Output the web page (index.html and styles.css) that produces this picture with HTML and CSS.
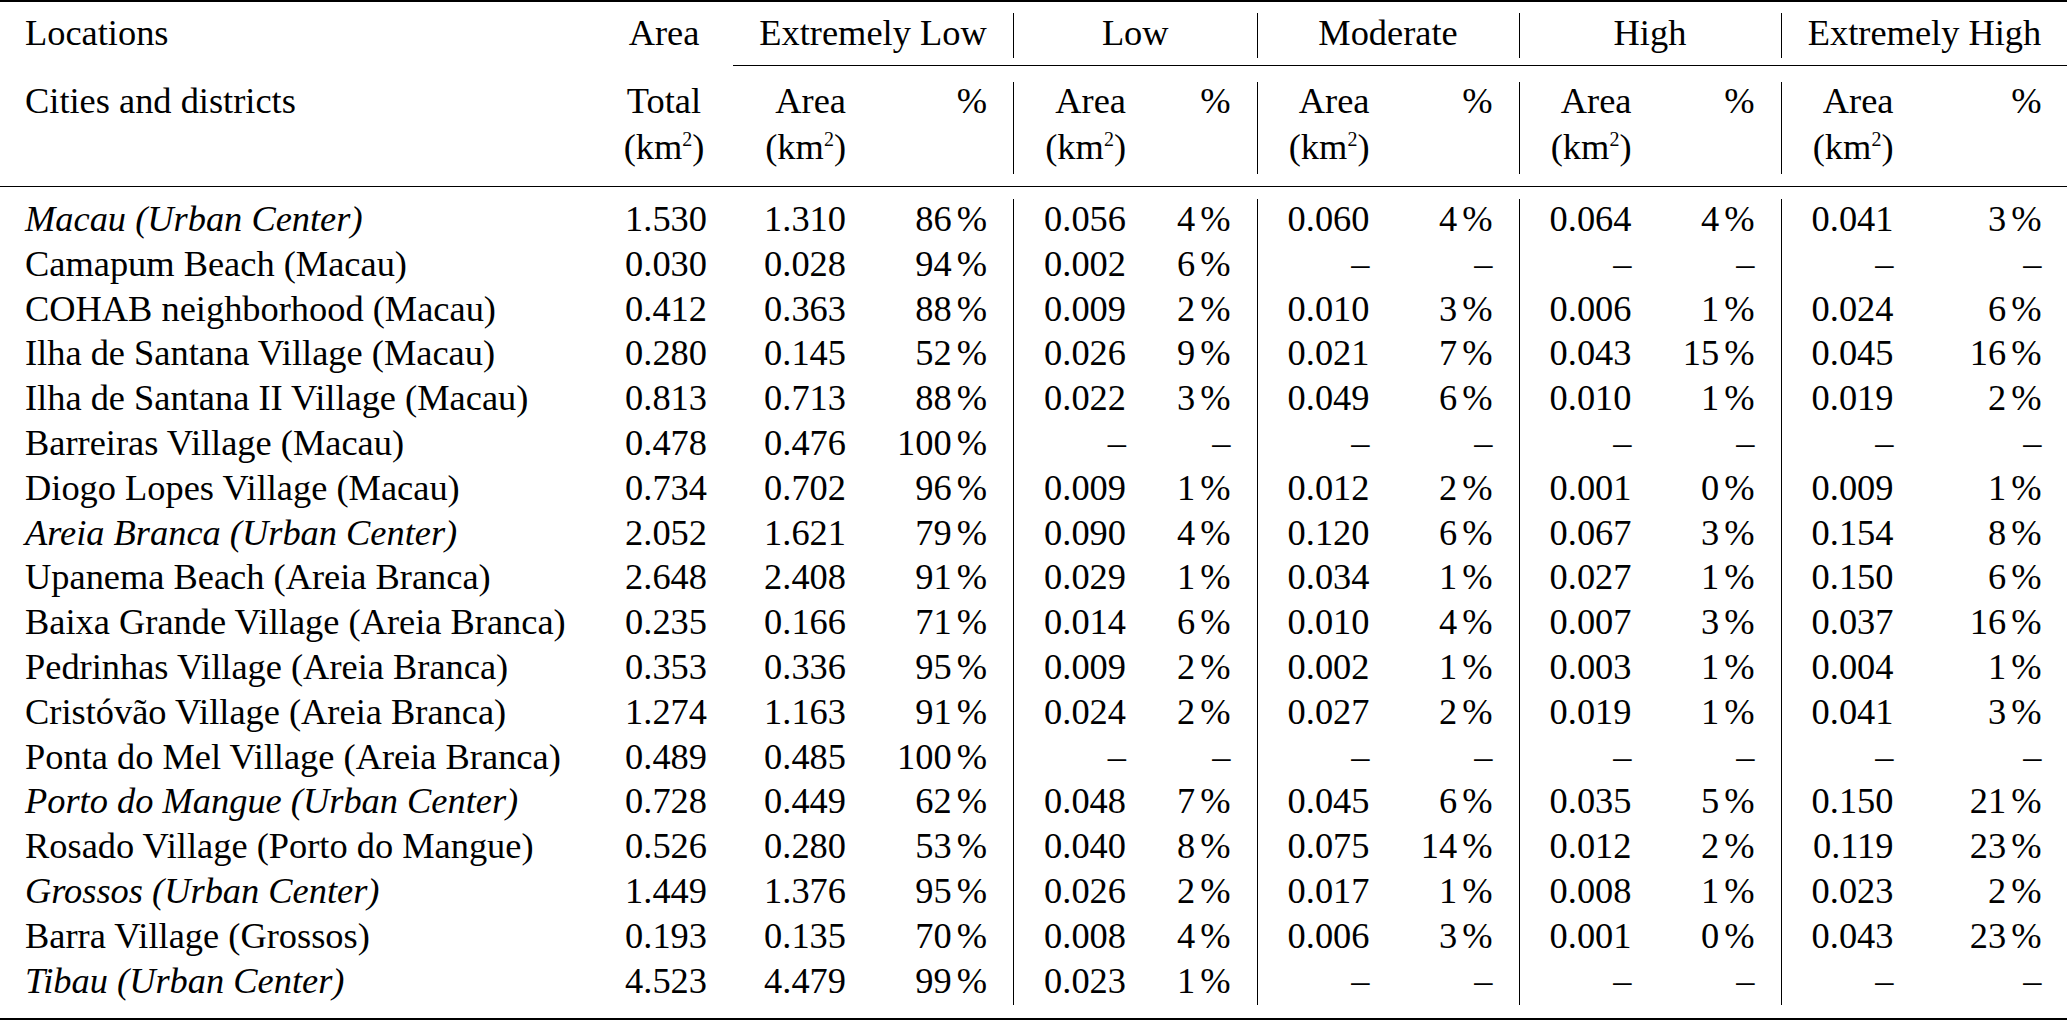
FILE: index.html
```html
<!DOCTYPE html>
<html lang="en">
<head>
<meta charset="utf-8">
<title>Susceptibility areas by location</title>
<link rel="stylesheet" href="styles.css">
</head>
<body>
<table class="tbl">
  <colgroup>
    <col class="c-loc"><col class="c-tot">
    <col class="c-area"><col class="c-el">
    <col class="c-area"><col class="c-lo">
    <col class="c-area"><col class="c-pc">
    <col class="c-area"><col class="c-pc">
    <col class="c-area"><col class="c-eh">
  </colgroup>
  <thead>
    <tr class="rule-top"><td colspan="12"></td></tr>
    <tr class="h1">
      <th class="loc">Locations</th>
      <th class="ctr">Area</th>
      <th class="ctr" colspan="2">Extremely Low</th>
      <th class="ctr vl" colspan="2">Low</th>
      <th class="ctr vl" colspan="2">Moderate</th>
      <th class="ctr vl" colspan="2">High</th>
      <th class="ctr vl" colspan="2">Extremely High</th>
    </tr>
    <tr class="gap-a"><td colspan="12"></td></tr>
    <tr class="cmid"><td colspan="2"></td><td class="cm" colspan="10"></td></tr>
    <tr class="h2">
      <th class="loc"><div class="ln">Cities and districts</div></th>
      <th class="ctr"><div class="ln">Total</div><div class="ln l2">(km<span class="sup">2</span>)</div></th>
      <th class="num"><div class="ln">Area</div><div class="ln l2">(km<span class="sup">2</span>)</div></th>
      <th class="num"><div class="ln">%</div></th>
      <th class="num vl"><div class="ln">Area</div><div class="ln l2">(km<span class="sup">2</span>)</div></th>
      <th class="num"><div class="ln">%</div></th>
      <th class="num vl"><div class="ln">Area</div><div class="ln l2">(km<span class="sup">2</span>)</div></th>
      <th class="num"><div class="ln">%</div></th>
      <th class="num vl"><div class="ln">Area</div><div class="ln l2">(km<span class="sup">2</span>)</div></th>
      <th class="num"><div class="ln">%</div></th>
      <th class="num vl"><div class="ln">Area</div><div class="ln l2">(km<span class="sup">2</span>)</div></th>
      <th class="num"><div class="ln">%</div></th>
    </tr>
    <tr class="gap-b"><td colspan="12"></td></tr>
    <tr class="rule-mid"><td colspan="12"></td></tr>
  </thead>
  <tbody>
    <tr><td class="loc it">Macau (Urban Center)</td><td class="num">1.530</td><td class="num">1.310</td><td class="num">86<span class="u">%</span></td><td class="num vl">0.056</td><td class="num">4<span class="u">%</span></td><td class="num vl">0.060</td><td class="num">4<span class="u">%</span></td><td class="num vl">0.064</td><td class="num">4<span class="u">%</span></td><td class="num vl">0.041</td><td class="num">3<span class="u">%</span></td></tr>
    <tr><td class="loc">Camapum Beach (Macau)</td><td class="num">0.030</td><td class="num">0.028</td><td class="num">94<span class="u">%</span></td><td class="num vl">0.002</td><td class="num">6<span class="u">%</span></td><td class="num vl">–</td><td class="num">–</td><td class="num vl">–</td><td class="num">–</td><td class="num vl">–</td><td class="num">–</td></tr>
    <tr><td class="loc">COHAB neighborhood (Macau)</td><td class="num">0.412</td><td class="num">0.363</td><td class="num">88<span class="u">%</span></td><td class="num vl">0.009</td><td class="num">2<span class="u">%</span></td><td class="num vl">0.010</td><td class="num">3<span class="u">%</span></td><td class="num vl">0.006</td><td class="num">1<span class="u">%</span></td><td class="num vl">0.024</td><td class="num">6<span class="u">%</span></td></tr>
    <tr><td class="loc">Ilha de Santana Village (Macau)</td><td class="num">0.280</td><td class="num">0.145</td><td class="num">52<span class="u">%</span></td><td class="num vl">0.026</td><td class="num">9<span class="u">%</span></td><td class="num vl">0.021</td><td class="num">7<span class="u">%</span></td><td class="num vl">0.043</td><td class="num">15<span class="u">%</span></td><td class="num vl">0.045</td><td class="num">16<span class="u">%</span></td></tr>
    <tr><td class="loc">Ilha de Santana II Village (Macau)</td><td class="num">0.813</td><td class="num">0.713</td><td class="num">88<span class="u">%</span></td><td class="num vl">0.022</td><td class="num">3<span class="u">%</span></td><td class="num vl">0.049</td><td class="num">6<span class="u">%</span></td><td class="num vl">0.010</td><td class="num">1<span class="u">%</span></td><td class="num vl">0.019</td><td class="num">2<span class="u">%</span></td></tr>
    <tr><td class="loc">Barreiras Village (Macau)</td><td class="num">0.478</td><td class="num">0.476</td><td class="num">100<span class="u">%</span></td><td class="num vl">–</td><td class="num">–</td><td class="num vl">–</td><td class="num">–</td><td class="num vl">–</td><td class="num">–</td><td class="num vl">–</td><td class="num">–</td></tr>
    <tr><td class="loc">Diogo Lopes Village (Macau)</td><td class="num">0.734</td><td class="num">0.702</td><td class="num">96<span class="u">%</span></td><td class="num vl">0.009</td><td class="num">1<span class="u">%</span></td><td class="num vl">0.012</td><td class="num">2<span class="u">%</span></td><td class="num vl">0.001</td><td class="num">0<span class="u">%</span></td><td class="num vl">0.009</td><td class="num">1<span class="u">%</span></td></tr>
    <tr><td class="loc it">Areia Branca (Urban Center)</td><td class="num">2.052</td><td class="num">1.621</td><td class="num">79<span class="u">%</span></td><td class="num vl">0.090</td><td class="num">4<span class="u">%</span></td><td class="num vl">0.120</td><td class="num">6<span class="u">%</span></td><td class="num vl">0.067</td><td class="num">3<span class="u">%</span></td><td class="num vl">0.154</td><td class="num">8<span class="u">%</span></td></tr>
    <tr><td class="loc">Upanema Beach (Areia Branca)</td><td class="num">2.648</td><td class="num">2.408</td><td class="num">91<span class="u">%</span></td><td class="num vl">0.029</td><td class="num">1<span class="u">%</span></td><td class="num vl">0.034</td><td class="num">1<span class="u">%</span></td><td class="num vl">0.027</td><td class="num">1<span class="u">%</span></td><td class="num vl">0.150</td><td class="num">6<span class="u">%</span></td></tr>
    <tr><td class="loc">Baixa Grande Village (Areia Branca)</td><td class="num">0.235</td><td class="num">0.166</td><td class="num">71<span class="u">%</span></td><td class="num vl">0.014</td><td class="num">6<span class="u">%</span></td><td class="num vl">0.010</td><td class="num">4<span class="u">%</span></td><td class="num vl">0.007</td><td class="num">3<span class="u">%</span></td><td class="num vl">0.037</td><td class="num">16<span class="u">%</span></td></tr>
    <tr><td class="loc">Pedrinhas Village (Areia Branca)</td><td class="num">0.353</td><td class="num">0.336</td><td class="num">95<span class="u">%</span></td><td class="num vl">0.009</td><td class="num">2<span class="u">%</span></td><td class="num vl">0.002</td><td class="num">1<span class="u">%</span></td><td class="num vl">0.003</td><td class="num">1<span class="u">%</span></td><td class="num vl">0.004</td><td class="num">1<span class="u">%</span></td></tr>
    <tr><td class="loc">Cristóvão Village (Areia Branca)</td><td class="num">1.274</td><td class="num">1.163</td><td class="num">91<span class="u">%</span></td><td class="num vl">0.024</td><td class="num">2<span class="u">%</span></td><td class="num vl">0.027</td><td class="num">2<span class="u">%</span></td><td class="num vl">0.019</td><td class="num">1<span class="u">%</span></td><td class="num vl">0.041</td><td class="num">3<span class="u">%</span></td></tr>
    <tr><td class="loc">Ponta do Mel Village (Areia Branca)</td><td class="num">0.489</td><td class="num">0.485</td><td class="num">100<span class="u">%</span></td><td class="num vl">–</td><td class="num">–</td><td class="num vl">–</td><td class="num">–</td><td class="num vl">–</td><td class="num">–</td><td class="num vl">–</td><td class="num">–</td></tr>
    <tr><td class="loc it">Porto do Mangue (Urban Center)</td><td class="num">0.728</td><td class="num">0.449</td><td class="num">62<span class="u">%</span></td><td class="num vl">0.048</td><td class="num">7<span class="u">%</span></td><td class="num vl">0.045</td><td class="num">6<span class="u">%</span></td><td class="num vl">0.035</td><td class="num">5<span class="u">%</span></td><td class="num vl">0.150</td><td class="num">21<span class="u">%</span></td></tr>
    <tr><td class="loc">Rosado Village (Porto do Mangue)</td><td class="num">0.526</td><td class="num">0.280</td><td class="num">53<span class="u">%</span></td><td class="num vl">0.040</td><td class="num">8<span class="u">%</span></td><td class="num vl">0.075</td><td class="num">14<span class="u">%</span></td><td class="num vl">0.012</td><td class="num">2<span class="u">%</span></td><td class="num vl">0.119</td><td class="num">23<span class="u">%</span></td></tr>
    <tr><td class="loc it">Grossos (Urban Center)</td><td class="num">1.449</td><td class="num">1.376</td><td class="num">95<span class="u">%</span></td><td class="num vl">0.026</td><td class="num">2<span class="u">%</span></td><td class="num vl">0.017</td><td class="num">1<span class="u">%</span></td><td class="num vl">0.008</td><td class="num">1<span class="u">%</span></td><td class="num vl">0.023</td><td class="num">2<span class="u">%</span></td></tr>
    <tr><td class="loc">Barra Village (Grossos)</td><td class="num">0.193</td><td class="num">0.135</td><td class="num">70<span class="u">%</span></td><td class="num vl">0.008</td><td class="num">4<span class="u">%</span></td><td class="num vl">0.006</td><td class="num">3<span class="u">%</span></td><td class="num vl">0.001</td><td class="num">0<span class="u">%</span></td><td class="num vl">0.043</td><td class="num">23<span class="u">%</span></td></tr>
    <tr><td class="loc it">Tibau (Urban Center)</td><td class="num">4.523</td><td class="num">4.479</td><td class="num">99<span class="u">%</span></td><td class="num vl">0.023</td><td class="num">1<span class="u">%</span></td><td class="num vl">–</td><td class="num">–</td><td class="num vl">–</td><td class="num">–</td><td class="num vl">–</td><td class="num">–</td></tr>
  </tbody>
  <tfoot>
    <tr class="gap-c"><td colspan="12"></td></tr>
    <tr class="rule-bot"><td colspan="12"></td></tr>
  </tfoot>
</table>
</body>
</html>
```

FILE: styles.css
```css
html, body {
  margin: 0;
  padding: 0;
  background: #ffffff;
}

body {
  font-family: "Liberation Serif", serif;
  font-size: 36.4px;
  color: #000000;
}

.tbl {
  width: 2067px;
  table-layout: fixed;
  border-collapse: separate;
  border-spacing: 0;
  font-family: "Liberation Serif", serif;
  font-size: 36.4px;
}

.c-loc { width: 595px; }
.c-tot { width: 138px; }
.c-area { width: 139px; }
.c-el { width: 141px; }
.c-lo { width: 104.5px; }
.c-pc { width: 123px; }
.c-eh { width: 148px; }

.tbl th,
.tbl td {
  padding: 0;
  font-family: "Liberation Serif", serif;
  font-weight: normal;
  vertical-align: top;
  white-space: nowrap;
  line-height: 38.8px;
}

/* spacer / rule rows */
.rule-top { height: 13px; }
.rule-top td { border-top: 2px solid #000; line-height: 0; }
.gap-a { height: 6.5px; }
.gap-a td { line-height: 0; }
.cmid { height: 17.2px; }
.cmid td { line-height: 0; }
.cmid .cm { border-top: 1px solid #000; }
.gap-b { height: 12px; }
.gap-b td { line-height: 0; }
.rule-mid { height: 13px; }
.rule-mid td { border-top: 1px solid #000; line-height: 0; }
.gap-c { height: 12.6px; }
.gap-c td { line-height: 0; }
.rule-bot { height: 2px; }
.rule-bot td { border-top: 2px solid #000; line-height: 0; }

/* header rows */
.h1 { height: 45px; }
.h1 th { padding-top: 1px; padding-bottom: 5.2px; }
.h2 { height: 92.3px; }
.h2 .l2 { margin-top: 7.8px; }

/* cell kinds */
.tbl .loc {
  text-align: left;
  padding-left: 25px;
}
.tbl .ctr { text-align: center; }
.tbl .num {
  text-align: right;
  padding-right: 26px;
}
.it { font-style: italic; }
.vl { border-left: 1px solid #000; }

/* data rows */
.tbl tbody tr { height: 44.8px; }
.tbl tbody td { padding-top: 1px; padding-bottom: 5px; }

.u { margin-left: 0.14em; }

.sup {
  font-size: 20px;
  line-height: 0;
  vertical-align: 13px;
}
```
